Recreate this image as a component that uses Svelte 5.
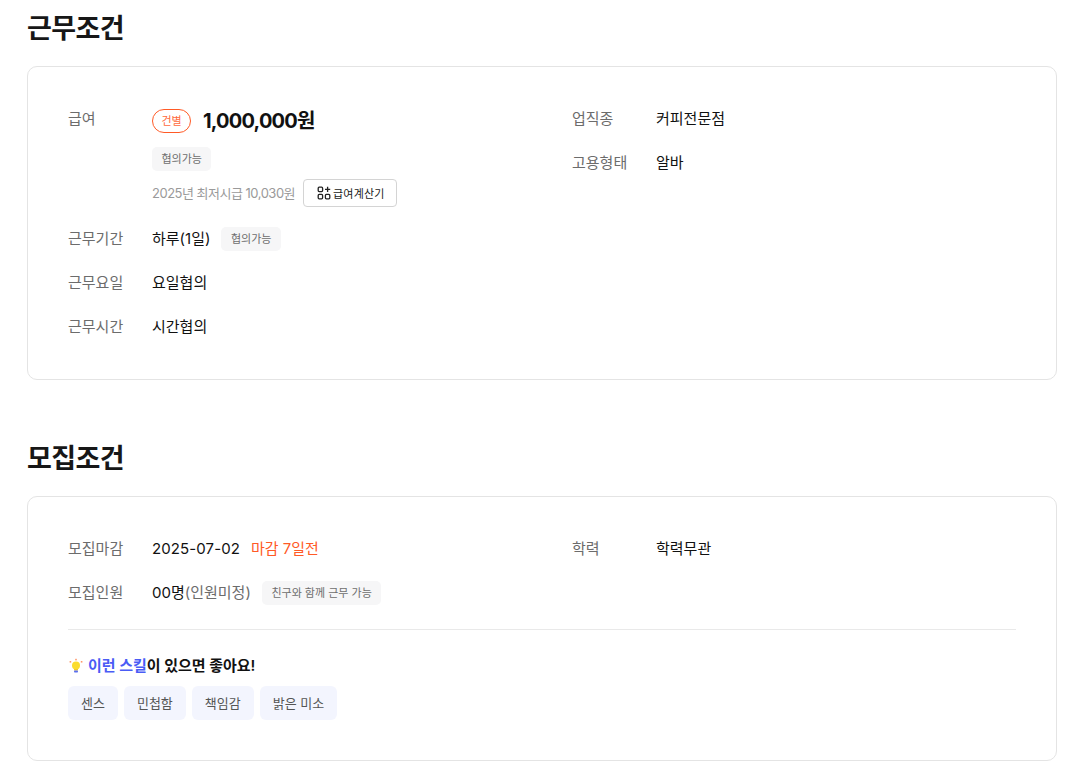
<script>
  const skills = ['센스', '민첩함', '책임감', '밝은 미소'];
</script>

<main class="page">
  <section class="block">
    <h2>근무조건</h2>
    <div class="card">
      <div class="cols">
        <div class="col">
          <div class="row pay">
            <span class="label">급여</span>
            <div class="value">
              <div class="pay-main">
                <span class="pay-type">건별</span>
                <strong>1,000,000원</strong>
              </div>
              <div class="pay-nego"><span class="chip">협의가능</span></div>
              <div class="pay-min">
                <span>2025년 최저시급 10,030원</span>
                <button type="button" class="calc">
                  <svg width="14" height="14" viewBox="0 0 14 14" fill="none" stroke="#222" stroke-width="1.3">
                    <rect x="1.2" y="1.2" width="4.4" height="4.4" rx="1" />
                    <rect x="1.2" y="8.4" width="4.4" height="4.4" rx="1" />
                    <rect x="8.4" y="8.4" width="4.4" height="4.4" rx="1" />
                    <path d="M10.6 0.8v5.2M8 3.4h5.2" />
                  </svg>
                  급여계산기
                </button>
              </div>
            </div>
          </div>
          <div class="row">
            <span class="label">근무기간</span>
            <div class="value inline"><span>하루(1일)</span><span class="chip">협의가능</span></div>
          </div>
          <div class="row">
            <span class="label">근무요일</span>
            <div class="value">요일협의</div>
          </div>
          <div class="row">
            <span class="label">근무시간</span>
            <div class="value">시간협의</div>
          </div>
        </div>
        <div class="col">
          <div class="row">
            <span class="label">업직종</span>
            <div class="value">커피전문점</div>
          </div>
          <div class="row">
            <span class="label">고용형태</span>
            <div class="value">알바</div>
          </div>
        </div>
      </div>
    </div>
  </section>

  <section class="block">
    <h2>모집조건</h2>
    <div class="card">
      <div class="cols">
        <div class="col">
          <div class="row">
            <span class="label">모집마감</span>
            <div class="value inline"><span class="date">2025-07-02</span><span class="due">마감 7일전</span></div>
          </div>
          <div class="row">
            <span class="label">모집인원</span>
            <div class="value inline"><span>00명<span class="muted">(인원미정)</span></span><span class="chip">친구와 함께 근무 가능</span></div>
          </div>
        </div>
        <div class="col">
          <div class="row">
            <span class="label">학력</span>
            <div class="value">학력무관</div>
          </div>
        </div>
      </div>
      <div class="skills">
        <p class="skills-title">
          <svg width="16" height="16" viewBox="0 0 16 16">
            <circle cx="8" cy="7.4" r="4" fill="#fbdc2e" />
            <rect x="6" y="11" width="4" height="1.5" fill="#f2c92a" />
            <rect x="6" y="12.6" width="4" height="2" rx="0.8" fill="#5a6ff0" />
            <rect x="7.2" y="0.8" width="1.6" height="1.6" fill="#ff9a6b" />
            <rect x="1.6" y="3" width="1.6" height="1.6" fill="#ff9a6b" />
            <rect x="12.8" y="3" width="1.6" height="1.6" fill="#ff9a6b" />
          </svg>
          <span><em>이런 스킬</em>이 있으면 좋아요!</span>
        </p>
        <ul>
          {#each skills as skill}
            <li>{skill}</li>
          {/each}
        </ul>
      </div>
    </div>
  </section>
</main>

<style>
  :global(body) {
    margin: 0;
    background: #fff;
    color: #111;
    font-family: Inter, 'Noto Sans CJK KR', sans-serif;
  }

  .page {
    padding: 0 17px 0 27px;
    height: 766px;
    overflow: hidden;
    box-sizing: border-box;
  }

  .block {
    margin-bottom: 50px;
  }

  h2 {
    margin: 0;
    height: 66px;
    padding-top: 11px;
    box-sizing: border-box;
    font-size: 27px;
    line-height: 36px;
    font-weight: 700;
    letter-spacing: -0.6px;
    color: #171717;
  }

  .card {
    border: 1px solid #e4e4e4;
    border-radius: 10px;
    padding: 40px;
  }

  .cols {
    display: grid;
    grid-template-columns: 504px 1fr;
  }

  .col {
    display: flex;
    flex-direction: column;
    gap: 20px;
  }

  .row {
    display: flex;
    font-size: 15px;
    line-height: 24px;
  }

  .label {
    flex: 0 0 84px;
    color: #6c6c6c;
  }

  .value {
    color: #111;
  }

  .inline {
    display: flex;
    align-items: center;
    gap: 11px;
  }

  .chip {
    display: inline-block;
    padding: 0 9.5px;
    height: 24px;
    line-height: 24px;
    border-radius: 5px;
    background: #f6f6f7;
    color: #6e6e6e;
    font-size: 11px;
  }

  .pay-main {
    display: flex;
    align-items: center;
    gap: 12px;
    height: 28px;
  }

  .pay-type {
    box-sizing: border-box;
    width: 39px;
    height: 24px;
    line-height: 22px;
    text-align: center;
    border: 1px solid #ff5a26;
    border-radius: 12px;
    color: #ff6a3d;
    font-size: 11px;
  }

  .pay-main strong {
    font-size: 20px;
    line-height: 28px;
    font-weight: 700;
    letter-spacing: -0.8px;
  }

  .pay-nego {
    display: flex;
    margin-top: 12px;
  }

  .pay-min {
    display: flex;
    align-items: center;
    gap: 8px;
    margin-top: 8px;
    font-size: 13px;
    letter-spacing: -0.5px;
    color: #9a9a9a;
  }

  .calc {
    display: flex;
    align-items: center;
    gap: 2px;
    box-sizing: border-box;
    height: 28px;
    padding: 0 11px 0 13px;
    border: 1px solid #d4d4d4;
    border-radius: 4px;
    background: #fff;
    color: #222;
    font-family: inherit;
    font-size: 11px;
    letter-spacing: 0.2px;
  }

  .date {
    letter-spacing: 0.1px;
  }

  .due {
    color: #ff5a26;
  }

  .muted {
    color: #6c6c6c;
  }

  .skills {
    margin-top: 24px;
    padding-top: 24px;
    border-top: 1px solid #e9e9e9;
  }

  .skills-title {
    display: flex;
    align-items: center;
    gap: 4px;
    margin: 0;
    font-size: 15px;
    line-height: 24px;
    font-weight: 600;
    letter-spacing: -0.05px;
    color: #111;
  }

  .skills-title em {
    font-style: normal;
    color: #4a5cf5;
  }

  ul {
    display: flex;
    gap: 6px;
    margin: 8px 0 0;
    padding: 0;
    list-style: none;
  }

  li {
    height: 34px;
    line-height: 34px;
    padding: 0 13px;
    border-radius: 6px;
    background: #f3f5fe;
    color: #555;
    font-size: 13px;
  }
</style>
